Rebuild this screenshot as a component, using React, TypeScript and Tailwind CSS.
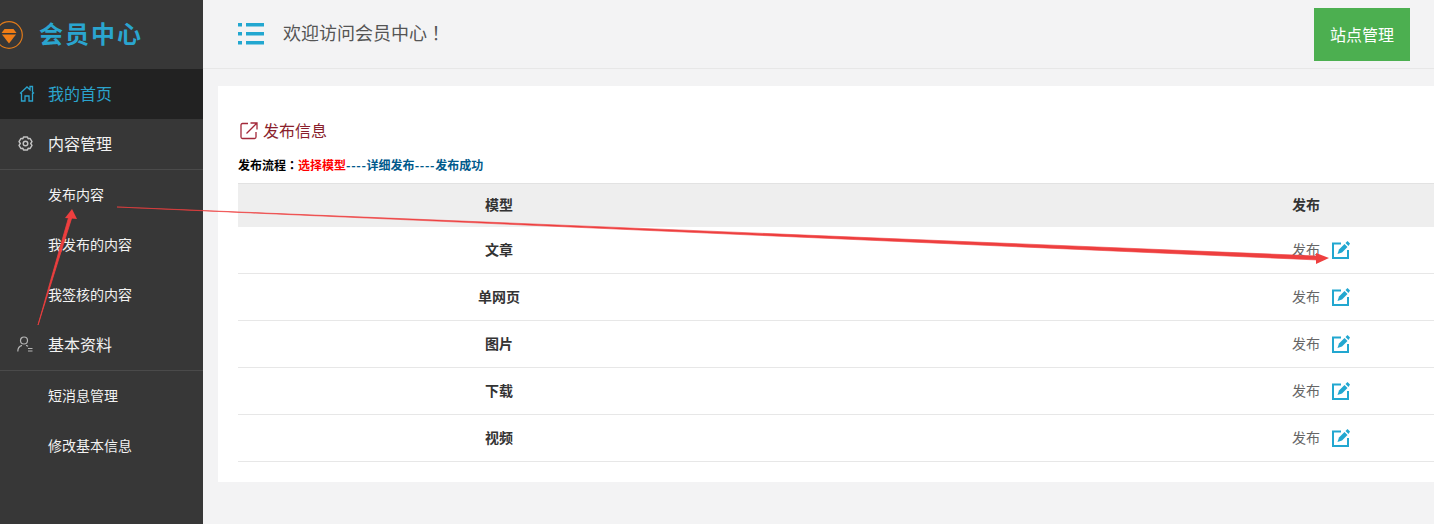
const font = { fontFamily: '"Noto Sans CJK SC", sans-serif' }

function HomeIcon() {
  return (
    <svg width="16" height="17" viewBox="0 0 16 17" fill="none" stroke="#2ba3cc" strokeWidth="1.3">
      <path d="M1 8.5 8 2l3 2.7V1.5h2.5V7L15 8.5" />
      <path d="M2.5 8v8h3.5v-5h4v5h3.5V8" />
    </svg>
  )
}

function GearIcon() {
  return (
    <svg width="15" height="15" viewBox="0 0 15 15" fill="none" stroke="#c4c4c4" strokeWidth="1.4" strokeLinejoin="round">
      <path d="M5.5 1h4l.6 1.8 1.9-.4 2 3.3-1.3 1.8 1.3 1.8-2 3.3-1.9-.4-.6 1.8h-4l-.6-1.8-1.9.4-2-3.3 1.3-1.8L1 5.7l2-3.3 1.9.4z" />
      <circle cx="7.5" cy="7.5" r="2.3" />
    </svg>
  )
}

function UserIcon() {
  return (
    <svg width="16" height="16" viewBox="0 0 16 16" fill="none" stroke="#b5b5b5" strokeWidth="1.2">
      <circle cx="7" cy="4.5" r="3.5" />
      <path d="M0.8 15.5c0-3.6 2-5.6 4.2-6.2M9 9.3c.8.2 1.5.6 2 1.1" />
      <path d="M11 12.5h4.5M11 15h4.5" />
    </svg>
  )
}

function ListIcon() {
  return (
    <svg width="26" height="22" viewBox="0 0 26 22" fill="#22a7d0">
      <rect x="0" y="0" width="4" height="3.5" />
      <rect x="8" y="0" width="18" height="3.5" />
      <rect x="0" y="9" width="4" height="3.5" />
      <rect x="8" y="9" width="18" height="3.5" />
      <rect x="0" y="18" width="4" height="3.5" />
      <rect x="8" y="18" width="18" height="3.5" />
    </svg>
  )
}

function EditIcon() {
  return (
    <svg width="18" height="18" viewBox="0 0 18 18" fill="none">
      <path d="M9 2.5H1v14.5h15V9" stroke="#22a7d0" strokeWidth="2" />
      <path d="M5.5 13 7 8.5 12.5 3l3 3L10 11.5z" fill="#22a7d0" />
      <path d="M13.5 2 15.5 0 18 2.5l-1.5 2.5z" fill="#22a7d0" />
    </svg>
  )
}

function Logo() {
  return (
    <svg width="28" height="28" viewBox="0 0 28 28" fill="none" className="shrink-0">
      <circle cx="14" cy="14" r="13.3" stroke="#e07a1a" strokeWidth="1.2" />
      <path d="M9.5 8h9l3 4h-15z" fill="#f07d16" />
      <path d="M7 13.5h14L14 22.5z" fill="#f07d16" />
    </svg>
  )
}

const rows = ['文章', '单网页', '图片', '下载', '视频']

function SideGroup({ icon, label }: { icon: React.ReactNode; label: string }) {
  return (
    <div className="h-[51px] pb-[2px] flex items-center text-[16px] text-[#f2f2f2] border-b border-[#4a4a4a]">
      <span className="w-[48px] flex justify-center pl-[2px] shrink-0">{icon}</span>
      <span>{label}</span>
    </div>
  )
}

function SideLink({ label }: { label: string }) {
  return <div className="h-[50px] pb-[1px] flex items-center pl-[48px] text-[14px] text-[#f2f2f2]">{label}</div>
}

export default function App() {
  return (
    <div className="relative w-[1434px] h-[524px] overflow-hidden flex bg-[#f3f3f4]" style={font}>
      <aside className="w-[203px] shrink-0 bg-[#373737]">
        <div className="h-[69px] flex items-center -ml-[5px] gap-[16px]">
          <Logo />
          <span className="text-[24px] leading-[28px] mb-[3px] font-bold tracking-[2px] text-[#2aa5cf]">会员中心</span>
        </div>
        <div className="h-[50px] pb-[2px] bg-[#222222] flex items-center text-[16px] text-[#2ba3cc]">
          <span className="w-[48px] flex justify-center pl-[6px] shrink-0">
            <HomeIcon />
          </span>
          <span>我的首页</span>
        </div>
        <SideGroup icon={<GearIcon />} label="内容管理" />
        <SideLink label="发布内容" />
        <SideLink label="我发布的内容" />
        <SideLink label="我签核的内容" />
        <SideGroup icon={<UserIcon />} label="基本资料" />
        <SideLink label="短消息管理" />
        <SideLink label="修改基本信息" />
      </aside>

      <main className="flex-1 min-w-0">
        <header className="h-[69px] border-b border-[#e7e7e7] flex items-center pl-[35px] pr-[24px]">
          <ListIcon />
          <span className="ml-[19px] mb-[3px] text-[18px] text-[#555555]">
            欢迎访问会员中心<span className="font-['Noto_Sans_CJK_TC']">！</span>
          </span>
          <button className="ml-auto mt-[1px] w-[96px] h-[53px] pb-[2px] bg-[#4caf50] text-white text-[16px]">站点管理</button>
        </header>

        <section className="mt-[17px] ml-[15px] h-[396px] bg-white pl-[20px] pt-[33px]">
          <div className="flex items-center gap-[5px] h-[24px] pl-[2px] text-[16px] text-[#8a1f2d]">
            <svg width="18" height="18" viewBox="0 0 18 18" fill="none" stroke="#a3293a" strokeWidth="1.3">
              <path d="M8 1.5H2.5a1.5 1.5 0 0 0-1.5 1.5v12a1.5 1.5 0 0 0 1.5 1.5h12a1.5 1.5 0 0 0 1.5-1.5V10" />
              <path d="M6.5 11.5 16.5 1.5M10.5 1h6.5v6.5" />
            </svg>
            <span className="mb-[2px]">发布信息</span>
          </div>
          <div className="mt-[13px] h-[18px] flex items-center text-[12px] font-bold text-black">
            <span>
              发布流程<span className="font-['Noto_Sans_CJK_TC']">：</span>
            </span>
            <span className="text-[#ff0000]">选择模型</span>
            <span className="text-[#005a8c] tracking-[0.7px]">----</span>
            <span className="text-[#005a8c]">详细发布</span>
            <span className="text-[#005a8c] tracking-[0.7px]">----</span>
            <span className="text-[#005a8c]">发布成功</span>
          </div>
          <div className="mt-[9px] text-[14px] text-[#333333]">
            <div className="h-[44px] pb-[2px] bg-[#eeeeee] border-t border-[#e2e2e2] grid grid-cols-[522px_1fr] items-center font-bold">
              <span className="text-center">模型</span>
              <span className="pl-[532px]">发布</span>
            </div>
            {rows.map(row => (
              <div key={row} className="h-[47px] border-b border-[#e7e7e7] grid grid-cols-[522px_1fr] items-center">
                <span className="text-center font-bold mb-[2px]">{row}</span>
                <span className="pl-[532px] flex items-center gap-[12px] text-[#666666]">
                  <span className="mb-[2px]">发布</span>
                  <EditIcon />
                </span>
              </div>
            ))}
          </div>
        </section>
      </main>

      {/* red annotation arrows drawn over the screenshot */}
      <svg className="absolute inset-0 pointer-events-none" width="1434" height="524" viewBox="0 0 1434 524" fill="none">
        <path d="M117 207 1318 256 1318 260Z" fill="#ee3f3f" stroke="#ee3f3f" strokeWidth="0.6" />
        <path d="M1316 253 1329 258 1316 264Z" fill="#ee3f3f" />
        <path d="M38 325 69 216 72 217Z" fill="#ee3f3f" stroke="#ee3f3f" strokeWidth="0.8" />
        <path d="M72 209 77 219 65 218Z" fill="#ee3f3f" />
      </svg>
    </div>
  )
}
